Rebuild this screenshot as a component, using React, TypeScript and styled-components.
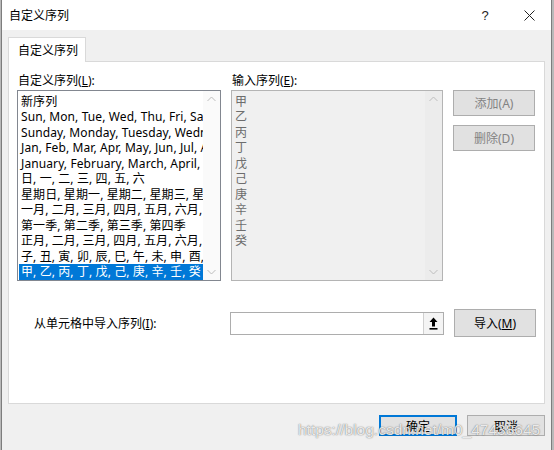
import React from 'react';
import styled, { createGlobalStyle } from 'styled-components';

const Global = createGlobalStyle`
  html, body { margin: 0; padding: 0; background: #b9b9b9; }
  body { font-family: "Noto Sans", "Noto Sans CJK SC", sans-serif; font-size: 12px; color: #000; }
`;

const Dialog = styled.div`
  position: relative;
  margin-left: 1px;
  width: 551px;
  height: 450px;
  background: #f0f0f0;
  border-left: 1px solid #7d7d7d;
  border-right: 1px solid #7d7d7d;
  box-sizing: border-box;
  display: flex;
  flex-direction: column;
`;

const TitleBar = styled.div`
  height: 30px;
  background: #fff;
  display: flex;
  align-items: center;
  padding-left: 7px;
  font-size: 12px;
`;

const Title = styled.div`
  flex: 1;
`;

const TitleButton = styled.div`
  width: 44px;
  height: 30px;
  display: flex;
  align-items: center;
  justify-content: center;
  font-family: "Liberation Sans", sans-serif;
  font-size: 13px;
  color: #222;
`;

const Body = styled.div`
  padding: 7px 0 0 6px;
`;

const Tab = styled.div`
  width: 78px;
  height: 25px;
  box-sizing: border-box;
  background: #fff;
  border: 1px solid #d9d9d9;
  border-bottom: none;
  display: flex;
  align-items: center;
  padding-left: 9px;
  position: relative;
  z-index: 1;
  margin-bottom: -1px;
`;

const Panel = styled.div`
  width: 537px;
  height: 343px;
  box-sizing: border-box;
  background: #fff;
  border: 1px solid #d9d9d9;
  padding: 8px 9px 0 8px;
  display: grid;
  grid-template-columns: 204px 212px 82px;
  grid-template-rows: 20px 191px;
  column-gap: 10px;
  align-content: start;
`;

const Label = styled.div`
  display: flex;
  align-items: center;
  padding-left: 1px;
  white-space: nowrap;
`;

const Key = styled.span`
  text-decoration: underline;
`;

const ListBox = styled.div<{ $disabled?: boolean }>`
  box-sizing: border-box;
  border: 1px solid ${p => (p.$disabled ? '#b4b4b4' : '#828790')};
  background: ${p => (p.$disabled ? '#f0f0f0' : '#fff')};
  display: flex;
  overflow: hidden;
`;

const Rows = styled.div`
  flex: 1;
  overflow: hidden;
  padding: 2.5px 0 0 1px;
`;

const Row = styled.div<{ $selected?: boolean; $disabled?: boolean }>`
  height: 15.5px;
  line-height: 15.5px;
  padding-left: 2px;
  white-space: nowrap;
  overflow: hidden;
  letter-spacing: 0.1px;
  background: ${p => (p.$selected ? '#0078d7' : 'transparent')};
  color: ${p => (p.$selected ? '#fff' : p.$disabled ? '#6d6d6d' : '#000')};
`;

const ScrollTrack = styled.div<{ $disabled?: boolean }>`
  width: 17px;
  background: ${p => (p.$disabled ? '#ececec' : '#fafafa')};
  display: flex;
  flex-direction: column;
  justify-content: space-between;
  align-items: center;
  padding: 5px 0;
`;

const ButtonColumn = styled.div`
  display: flex;
  flex-direction: column;
  gap: 9px;
`;

const Button = styled.div<{ $disabled?: boolean; $default?: boolean; $h?: number }>`
  height: ${p => p.$h ?? 26}px;
  box-sizing: border-box;
  background: #e1e1e1;
  border: 1px solid ${p => (p.$default ? '#0078d7' : '#adadad')};
  box-shadow: ${p => (p.$default ? 'inset 0 0 0 1px #0078d7' : 'none')};
  color: ${p => (p.$disabled ? '#838383' : '#000')};
  display: flex;
  align-items: center;
  justify-content: center;
  white-space: nowrap;
`;

const ImportRow = styled.div`
  grid-column: 1 / 4;
  display: grid;
  grid-template-columns: 204px 213px 82px;
  column-gap: 10px;
  align-items: center;
  margin-top: 28px;
  height: 28px;
`;

const ImportLabel = styled.div`
  padding-left: 17px;
  white-space: nowrap;
`;

const RefInput = styled.div`
  height: 23px;
  box-sizing: border-box;
  border: 1px solid #adadad;
  background: #fff;
  display: flex;
  justify-content: flex-end;
  margin-left: -1px;
`;

const RefButton = styled.div`
  width: 19px;
  border-left: 1px solid #d0d0d0;
  background: #f4f4f4;
  display: flex;
  align-items: center;
  justify-content: center;
`;

const Footer = styled.div`
  display: flex;
  justify-content: flex-end;
  gap: 10px;
  padding: 11px 6px 0 0;
`;

const FooterButton = styled(Button)`
  width: 78px;
`;

const Watermark = styled.div`
  position: absolute;
  left: 296px;
  top: 421px;
  font-family: "Liberation Sans", sans-serif;
  font-size: 15.5px;
  color: rgba(255, 255, 255, 0.85);
  text-shadow: 0 0 1px rgba(60, 60, 60, 0.7), 0 0 2px rgba(60, 60, 60, 0.25);
  pointer-events: none;
  white-space: nowrap;
`;

const Chevron = ({ up }: { up?: boolean }) => (
  <svg width="9" height="6" viewBox="0 0 9 6">
    <path d={up ? 'M0.5 5 L4.5 1 L8.5 5' : 'M0.5 1 L4.5 5 L8.5 1'} fill="none" stroke="#bdbdbd" strokeWidth="1" />
  </svg>
);

const leftRows = [
  '新序列',
  'Sun, Mon, Tue, Wed, Thu, Fri, Sat',
  'Sunday, Monday, Tuesday, Wednesday, Thursday',
  'Jan, Feb, Mar, Apr, May, Jun, Jul, Aug',
  'January, February, March, April, May, June',
  '日, 一, 二, 三, 四, 五, 六',
  '星期日, 星期一, 星期二, 星期三, 星期四',
  '一月, 二月, 三月, 四月, 五月, 六月, 七月',
  '第一季, 第二季, 第三季, 第四季',
  '正月, 二月, 三月, 四月, 五月, 六月, 七月',
  '子, 丑, 寅, 卯, 辰, 巳, 午, 未, 申, 酉, 戌, 亥',
  '甲, 乙, 丙, 丁, 戊, 己, 庚, 辛, 壬, 癸',
];

const rightRows = ['甲', '乙', '丙', '丁', '戊', '己', '庚', '辛', '壬', '癸'];

export default function App() {
  return (
    <>
      <Global />
      <Dialog>
        <TitleBar>
          <Title>自定义序列</Title>
          <TitleButton>?</TitleButton>
          <TitleButton>
            <svg width="11" height="11" viewBox="0 0 11 11">
              <path d="M0.5 0.5 L10.5 10.5 M10.5 0.5 L0.5 10.5" stroke="#222" strokeWidth="1" />
            </svg>
          </TitleButton>
        </TitleBar>
        <Body>
          <Tab>自定义序列</Tab>
          <Panel>
            <Label>
              自定义序列(<Key>L</Key>):
            </Label>
            <Label>
              输入序列(<Key>E</Key>):
            </Label>
            <div />
            <ListBox>
              <Rows>
                {leftRows.map((r, i) => (
                  <Row key={i} $selected={i === leftRows.length - 1}>
                    {r}
                  </Row>
                ))}
              </Rows>
              <ScrollTrack>
                <Chevron up />
                <Chevron />
              </ScrollTrack>
            </ListBox>
            <ListBox $disabled>
              <Rows>
                {rightRows.map(r => (
                  <Row key={r} $disabled>
                    {r}
                  </Row>
                ))}
              </Rows>
              <ScrollTrack $disabled>
                <Chevron up />
                <Chevron />
              </ScrollTrack>
            </ListBox>
            <ButtonColumn>
              <Button $disabled>添加(A)</Button>
              <Button $disabled>删除(D)</Button>
            </ButtonColumn>
            <ImportRow>
              <ImportLabel>
                从单元格中导入序列(<Key>I</Key>):
              </ImportLabel>
              <RefInput>
                <RefButton>
                  <svg width="9" height="13" viewBox="0 0 9 13">
                    <path d="M4.5 0.5 L8.5 5 L6 5 L6 9.5 L3 9.5 L3 5 L0.5 5 Z" fill="#000" />
                    <rect x="0.5" y="11" width="8" height="1.6" fill="#000" />
                  </svg>
                </RefButton>
              </RefInput>
              <Button $h={28}>
                导入(<Key>M</Key>)
              </Button>
            </ImportRow>
          </Panel>
          <Footer>
            <FooterButton $default $h={21}>确定</FooterButton>
            <FooterButton $h={21}>取消</FooterButton>
          </Footer>
        </Body>
        <Watermark>https://blog.csdn.net/m0_47438645</Watermark>
      </Dialog>
    </>
  );
}
